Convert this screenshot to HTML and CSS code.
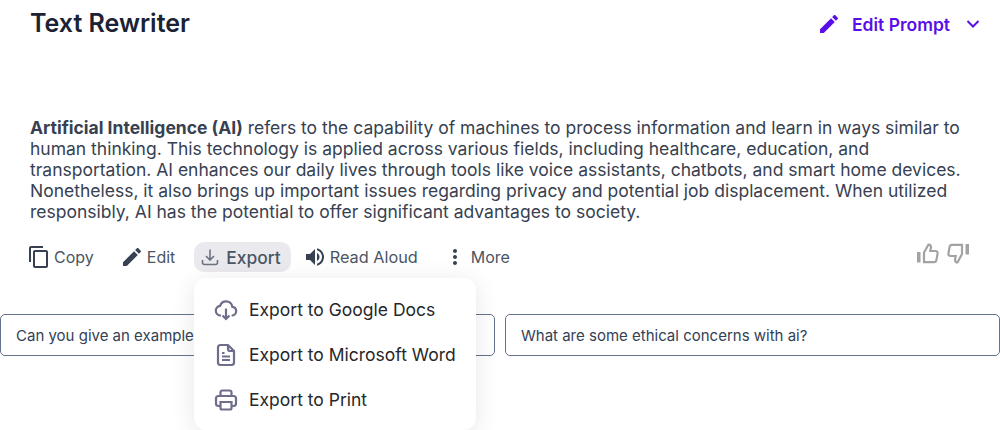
FILE: index.html
```html
<!DOCTYPE html>
<html lang="en">
<head>
<meta charset="utf-8">
<title>Text Rewriter</title>
<link rel="stylesheet" href="styles.css">
</head>
<body>
<div class="page">
  <header class="top">
    <h1 class="title">Text Rewriter</h1>
    <div class="prompt">
      <svg class="prompt-pen" viewBox="0 0 24 24"><path d="M3 17.25V21h3.75L17.81 9.94l-3.75-3.75L3 17.25zM20.71 7.04c.39-.39.39-1.02 0-1.41l-2.34-2.34c-.39-.39-1.02-.39-1.41 0l-1.83 1.83 3.75 3.75 1.83-1.83z"/></svg>
      <span>Edit Prompt</span>
      <svg class="prompt-chev" viewBox="0 0 14 14"><path d="M1.5 4 7 9.5 12.500 4"/></svg>
    </div>
  </header>
  <p class="answer"><strong>Artificial Intelligence (AI)</strong> refers to the capability of machines to process information and learn in ways similar to human thinking. This technology is applied across various fields, including healthcare, education, and transportation. AI enhances our daily lives through tools like voice assistants, chatbots, and smart home devices. Nonetheless, it also brings up important issues regarding privacy and potential job displacement. When utilized responsibly, AI has the potential to offer significant advantages to society.</p>
  <div class="actions">
    <div class="tools">
      <button class="tool tool-copy"><svg class="ic" viewBox="0 0 24 24"><path d="M16 1H4c-1.100 0-2 .9-2 2v14h2V3h12V1zm3 4H8c-1.100 0-2 .9-2 2v14c0 1.100.9 2 2 2h11c1.100 0 2-.9 2-2V7c0-1.100-.9-2-2-2zm0 16H8V7h11v14z"/></svg>Copy</button>
      <button class="tool tool-edit"><svg class="ic" viewBox="0 0 24 24"><path d="M3 17.250V21h3.750L17.810 9.940l-3.750-3.750L3 17.250zM20.710 7.040c.39-.39.39-1.020 0-1.410l-2.340-2.340c-.39-.39-1.020-.39-1.410 0l-1.830 1.830 3.750 3.750 1.830-1.830z"/></svg>Edit</button>
      <button class="tool tool-active"><svg class="ic-line" viewBox="0 0 20 20"><path d="M10 2.500v10M6 9l4 4 4-4M2.500 13v2.500a2 2 0 0 0 2 2h11a2 2 0 0 0 2-2V13"/></svg>Export</button>
      <button class="tool tool-read"><svg class="ic" viewBox="0 0 24 24"><path d="M3 9v6h4l5 5V4L7 9H3zm13.500 3c0-1.770-1.020-3.290-2.500-4.030v8.050c1.480-.73 2.500-2.250 2.500-4.020zM14 3.230v2.060c2.890.86 5 3.540 5 6.710s-2.110 5.850-5 6.710v2.060c4.010-.91 7-4.490 7-8.770s-2.990-7.860-7-8.770z"/></svg>Read Aloud</button>
      <button class="tool tool-more"><svg class="ic" viewBox="0 0 24 24"><path d="M12 8c1.100 0 2-.9 2-2s-.9-2-2-2-2 .9-2 2 .9 2 2 2zm0 2c-1.100 0-2 .9-2 2s.9 2 2 2 2-.9 2-2-.9-2-2-2zm0 6c-1.100 0-2 .9-2 2s.9 2 2 2 2-.9 2-2-.9-2-2-2z"/></svg>More</button>
    </div>
    <div class="votes">
      <svg class="vote" viewBox="0 0 22 22"><path class="vote-bar" d="M0 9h3.500v10.500H0z"/><path d="M7 9.500 11.500 1.500c1.600 0 2.500 1.200 2.500 2.800L13.300 8h5.200c1.400 0 2.300 1.100 2.100 2.400l-1.200 6.700c-.2 1.200-1.100 2-2.300 2H7z"/></svg>
      <svg class="vote" viewBox="0 0 22 22"><path class="vote-bar" d="M22 11.500h-3.500V1H22z"/><path d="M15 11 10.500 19.500c-1.600 0-2.500-1.200-2.500-2.800L8.700 13H3.500c-1.400 0-2.300-1.100-2.100-2.400L2.600 3.900c.2-1.200 1.100-2 2.300-2H15z"/></svg>
    </div>
  </div>
  <div class="chips">
    <button class="chip">Can you give an example of how ai is used?</button>
    <button class="chip">What are some ethical concerns with ai?</button>
  </div>
  <div class="menu">
    <div class="menu-item"><svg class="menu-ic" viewBox="0 0 24 24"><path d="M7 17.500c-3 0-5.200-2.100-5.200-4.800 0-2.500 1.900-4.500 4.300-4.800C7 5 9.300 3.300 12 3.300c3.300 0 6 2.400 6.300 5.500 2.200.3 3.900 2 3.900 4.200 0 2.400-1.900 4.500-4.600 4.500M12 10.500v10.500M8.500 17.500 12 21l3.500-3.500"/></svg>Export to Google Docs</div>
    <div class="menu-item"><svg class="menu-ic" viewBox="0 0 24 24"><path d="M14 2H6.500A2.500 2.500 0 0 0 4 4.500v15A2.500 2.500 0 0 0 6.500 22h11a2.500 2.500 0 0 0 2.500-2.500V8zM14 2v4a2 2 0 0 0 2 2h4M8 10h2.500M8 13.500h8M8 17h8"/></svg>Export to Microsoft Word</div>
    <div class="menu-item"><svg class="menu-ic" viewBox="0 0 24 24"><path d="M6.500 8V4.500a2 2 0 0 1 2-2h7a2 2 0 0 1 2 2V8M6.500 18H4.500a2.500 2.500 0 0 1-2.500-2.500v-5A2.500 2.500 0 0 1 4.500 8h15a2.500 2.500 0 0 1 2.500 2.500v5a2.500 2.500 0 0 1-2.500 2.500h-2M6.500 14h11v6a1.500 1.500 0 0 1-1.500 1.500H8A1.500 1.500 0 0 1 6.500 20z"/></svg>Export to Print</div>
  </div>
</div>
</body>
</html>
```
FILE: styles.css
```css
* { box-sizing: border-box; }
html, body { margin: 0; height: 100%; }
body { background: #fff; font-family: Inter, "Liberation Sans", sans-serif; overflow: hidden; }
.page { position: relative; width: 1000px; height: 430px; overflow: hidden; }
.top { display: flex; align-items: center; justify-content: space-between; height: 48px; padding: 0 20px 0 30px; }
.title { margin: 0 0 2px; font-size: 25px; font-weight: 600; line-height: 47px; color: #1a2233; }
.prompt { display: flex; align-items: center; color: #5b0fe8; font-size: 17.500px; font-weight: 600; }
.prompt-pen { width: 24px; height: 24px; fill: #5b0fe8; margin-right: 11px; }
.prompt-chev { width: 14px; height: 14px; margin-left: 16px; fill: none; stroke: #5b0fe8; stroke-width: 2; }
.answer { margin: 69px 30px 0; font-size: 17.500px; line-height: 21px; color: #374151; }
.answer strong { font-weight: 700; }
.actions { display: flex; justify-content: space-between; align-items: center; margin-top: 20px; padding: 0 31px 0 21px; height: 30px; }
.tools { display: flex; align-items: center; }
.tool { display: flex; align-items: center; height: 30px; padding: 0 6px; border: 0; border-radius: 10px; background: none; font: 400 16px Inter, "Liberation Sans", sans-serif; color: #4b5563; }
.tool-copy { margin-right: 14px; }
.tool-edit { margin-right: 13px; }
.tool-active { background: #eaeaee; padding: 0 10px 0 6px; font-size: 17.400px; font-weight: 500; color: #4b5563; margin-right: 6px; }
.tool-read { margin-right: 13px; font-size: 16.300px; }
.ic { width: 24px; height: 24px; fill: #374151; margin-right: 3px; flex: none; }
.tool-more .ic { margin-right: 4px; }
.ic-line { width: 20px; height: 20px; fill: none; stroke: #6b7280; stroke-width: 1.600; margin-right: 6px; }
.votes { display: flex; gap: 8px; margin-top: -6px; }
.vote { width: 22px; height: 22px; fill: none; stroke: #a3a3a3; stroke-width: 2.200; }
.vote-bar { fill: #a3a3a3; stroke: none; }
.chips { display: flex; gap: 10px; margin-top: 42px; }
.chip { flex: 1; height: 42px; padding: 0 15px; text-align: left; background: #fff; border: 1px solid #64748b; border-radius: 5px; font: 400 15px Inter, "Liberation Sans", sans-serif; color: #334155; white-space: nowrap; overflow: hidden; }
.menu { position: absolute; left: 194px; top: 278px; width: 282px; height: 152px; padding: 9px 0 0 20px; background: #fff; border-radius: 12px; box-shadow: 0 4px 24px rgba(0, 0, 0, .1); }
.menu-item { display: flex; align-items: center; height: 45px; font-size: 17.500px; color: #27272a; }
.menu-ic { width: 24px; height: 24px; margin-right: 11px; fill: none; stroke: #6e6e8c; stroke-width: 2.200; flex: none; }
```
